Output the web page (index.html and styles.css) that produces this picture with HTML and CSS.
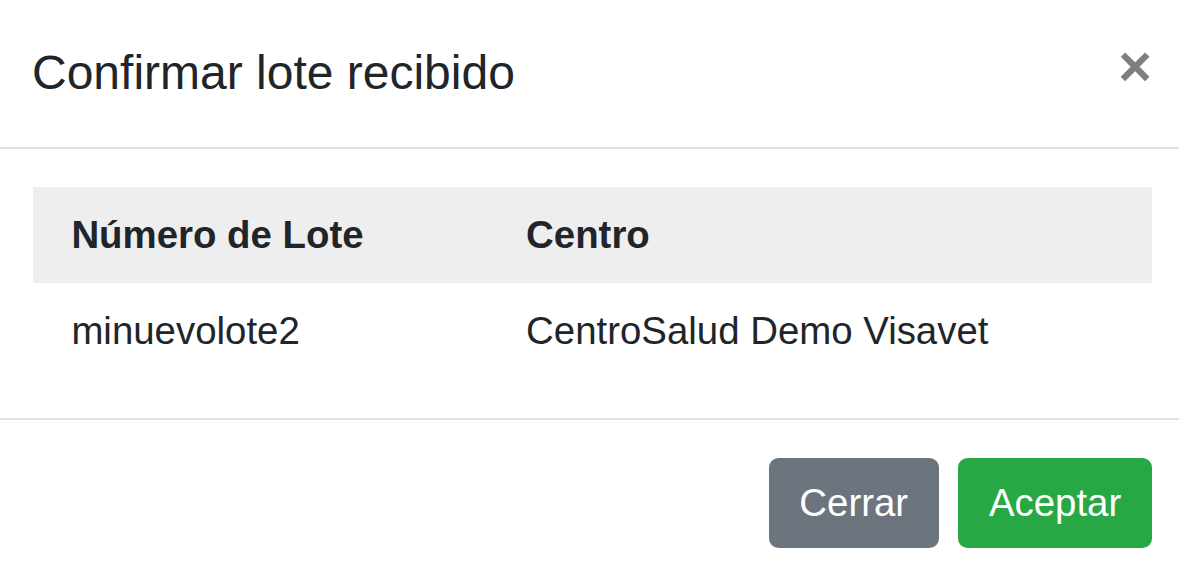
FILE: index.html
```html
<!DOCTYPE html>
<html lang="es">
<head>
<meta charset="utf-8">
<title>Confirmar lote recibido</title>
<link rel="stylesheet" href="styles.css">
</head>
<body>
<div class="modal">
  <div class="modal-header">
    <h5 class="modal-title">Confirmar lote recibido</h5>
    <button type="button" class="close" aria-label="Close">&times;</button>
  </div>
  <div class="modal-body">
    <table class="table">
      <thead>
        <tr class="head-row">
          <th>Número de Lote</th>
          <th>Centro</th>
        </tr>
      </thead>
      <tbody>
        <tr>
          <td>minuevolote2</td>
          <td>CentroSalud Demo Visavet</td>
        </tr>
      </tbody>
    </table>
  </div>
  <div class="modal-footer">
    <button type="button" class="btn btn-secondary">Cerrar</button>
    <button type="button" class="btn btn-success">Aceptar</button>
  </div>
</div>
</body>
</html>
```
FILE: styles.css
```css
html, body {
  margin: 0;
  padding: 0;
  background: #fff;
}
body {
  font-family: "Liberation Sans", Arial, Helvetica, sans-serif;
  color: #212529;
  font-size: 38.4px;
  line-height: 1.5;
  overflow: hidden;
}
.modal {
  background: #fff;
}
.modal-header {
  display: flex;
  align-items: flex-start;
  padding: 37.4px 27px 37.4px 32px;
  border-bottom: 2px solid #dee2e6;
}
.modal-title {
  margin: 0;
  font-size: 48px;
  font-weight: 400;
  line-height: 72px;
}
.close {
  margin-left: auto;
  margin-top: 1px;
  padding: 0;
  background: none;
  border: 0;
  font-family: "Liberation Sans", Arial, sans-serif;
  font-size: 57.6px;
  font-weight: 700;
  line-height: 1;
  color: #000;
  opacity: 0.5;
  cursor: pointer;
}
.modal-body {
  padding: 38.4px 27px 38.4px 33px;
}
.table {
  width: 100%;
  border-collapse: collapse;
}
.table th,
.table td {
  padding: 19.2px 38.4px;
  text-align: left;
  vertical-align: top;
  line-height: 57.6px;
}
.table th {
  font-weight: 700;
}
.head-row {
  background: #eeeeee;
}
.modal-footer {
  display: flex;
  justify-content: flex-end;
  align-items: center;
  padding: 28.8px 17.4px 28.8px 28.8px;
  border-top: 2px solid #dee2e6;
}
.btn {
  margin: 9.6px;
  padding: 14.4px 28.8px;
  font-family: "Liberation Sans", Arial, sans-serif;
  font-size: 38.4px;
  line-height: 57.6px;
  border: 2.4px solid transparent;
  border-radius: 9.6px;
  color: #fff;
  cursor: pointer;
}
.btn-secondary {
  background: #6c757d;
  border-color: #6c757d;
}
.btn-success {
  background: #28a745;
  border-color: #28a745;
}
```
